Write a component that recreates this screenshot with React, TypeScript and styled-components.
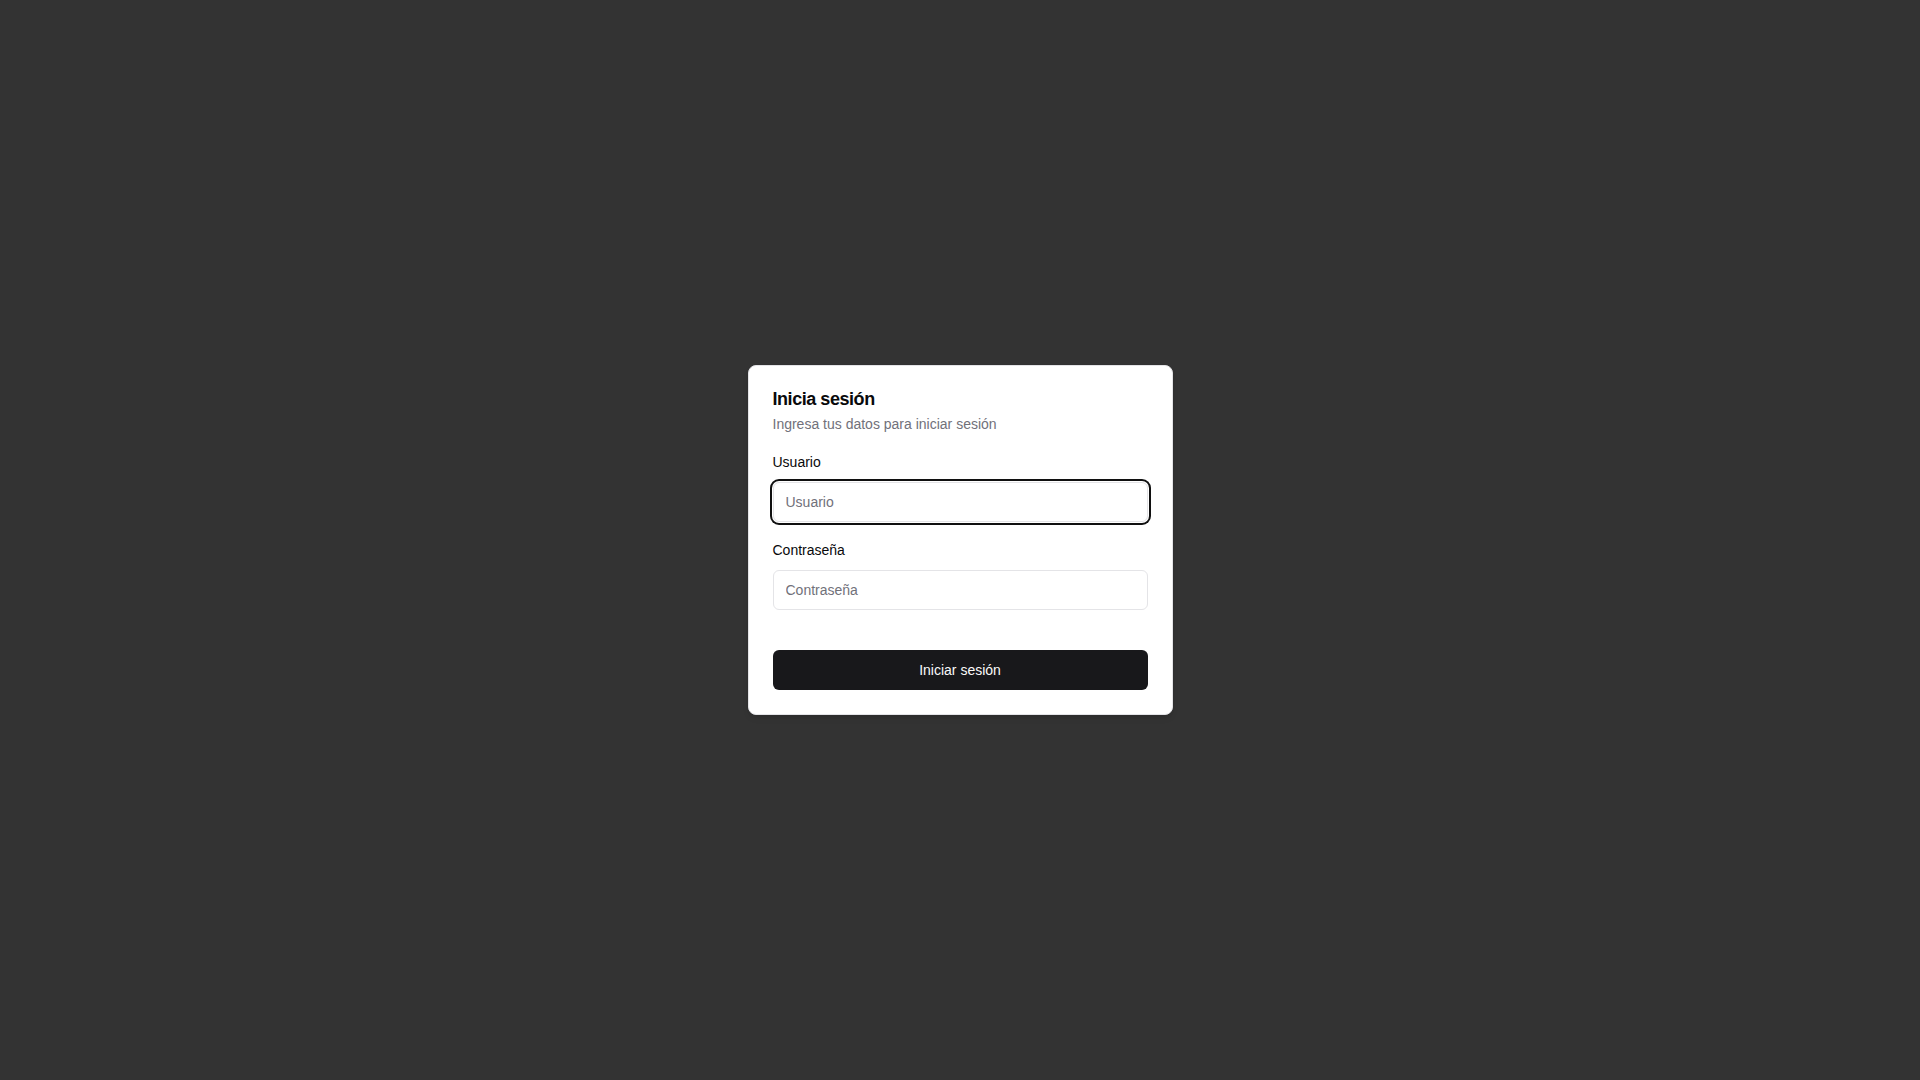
import React from 'react'
import styled, { createGlobalStyle } from 'styled-components'

const GlobalStyle = createGlobalStyle`
  * {
    box-sizing: border-box;
  }

  body {
    margin: 0;
    background: #333333;
    font-family: 'Liberation Sans', Arial, sans-serif;
    color: #09090b;
  }
`

const Page = styled.main`
  min-height: 100vh;
  display: flex;
  align-items: center;
  justify-content: center;
`

const Card = styled.div`
  width: 425px;
  display: flex;
  flex-direction: column;
  gap: 20px;
  padding: 24px;
  background: #ffffff;
  border: 1px solid #e4e4e7;
  border-radius: 8px;
  box-shadow: 0 4px 6px -1px rgba(0, 0, 0, 0.1), 0 2px 4px -2px rgba(0, 0, 0, 0.1);
`

const Header = styled.div`
  display: flex;
  flex-direction: column;
  gap: 6px;
`

const Title = styled.h1`
  margin: 0;
  font-size: 18px;
  font-weight: 600;
  line-height: 18px;
  letter-spacing: -0.025em;
  color: #09090b;
`

const Description = styled.p`
  margin: 0;
  font-size: 14px;
  line-height: 20px;
  color: #71717a;
`

const Form = styled.form`
  display: flex;
  flex-direction: column;
  gap: 20px;
`

const Field = styled.div`
  display: flex;
  flex-direction: column;
  gap: 12px;
`

const Label = styled.label`
  font-size: 14px;
  font-weight: 500;
  line-height: 16px;
  color: #09090b;
`

const Input = styled.input<{ $focused?: boolean }>`
  height: 40px;
  width: 100%;
  padding: 0 12px;
  font-family: inherit;
  font-size: 14px;
  color: #09090b;
  background: #ffffff;
  border: 1px solid #e4e4e7;
  border-radius: 6px;
  outline: none;
  box-shadow: ${(props) =>
    props.$focused ? '0 0 0 1px #ffffff, 0 0 0 3px #101010' : 'none'};

  &::placeholder {
    color: #71717a;
  }
`

const SubmitButton = styled.button`
  margin-top: 20px;
  height: 40px;
  width: 100%;
  font-family: inherit;
  font-size: 14px;
  font-weight: 500;
  color: #fafafa;
  background: #18181b;
  border: none;
  border-radius: 6px;
  cursor: pointer;
`

export default function App() {
  return (
    <>
      <GlobalStyle />
      <Page>
        <Card>
          <Header>
            <Title>Inicia sesión</Title>
            <Description>Ingresa tus datos para iniciar sesión</Description>
          </Header>
          <Form onSubmit={(e) => e.preventDefault()}>
            <Field>
              <Label htmlFor="usuario">Usuario</Label>
              <Input id="usuario" placeholder="Usuario" $focused />
            </Field>
            <Field>
              <Label htmlFor="password">Contraseña</Label>
              <Input id="password" type="password" placeholder="Contraseña" />
            </Field>
            <SubmitButton type="submit">Iniciar sesión</SubmitButton>
          </Form>
        </Card>
      </Page>
    </>
  )
}
